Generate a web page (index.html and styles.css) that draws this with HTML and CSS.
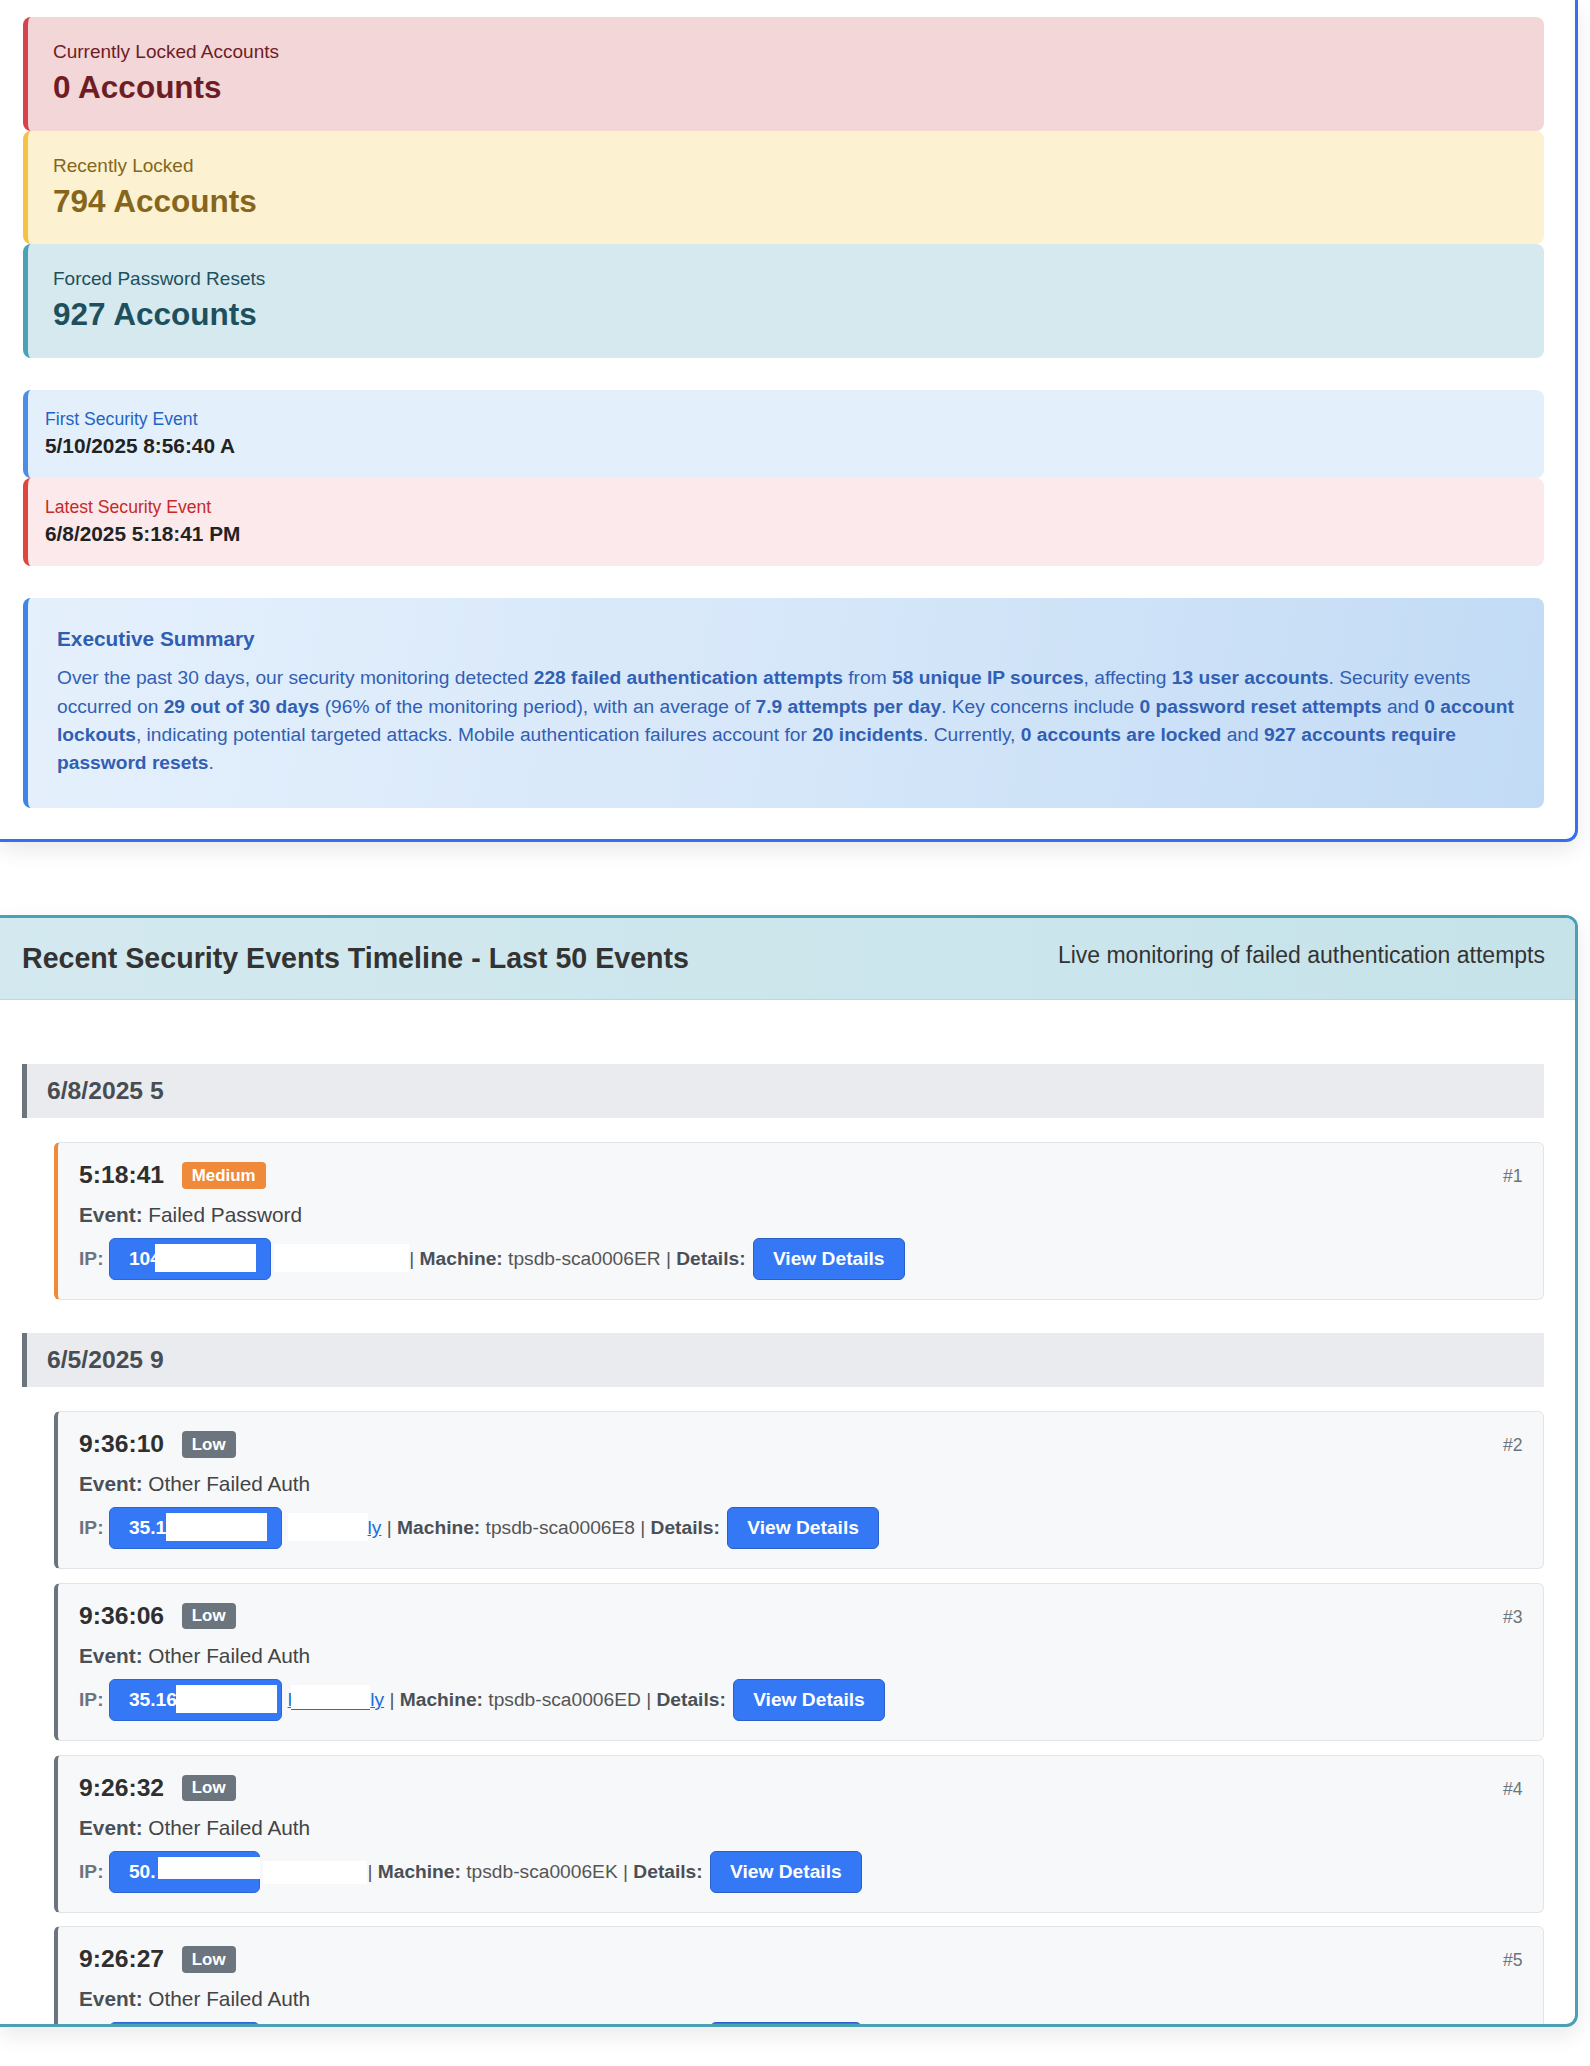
FILE: index.html
```html
<!DOCTYPE html>
<html lang="en">
<head>
<meta charset="utf-8">
<title>Security Monitoring</title>
<link rel="stylesheet" href="styles.css">
</head>
<body>
<div class="page">
  <section class="panel panel-overview">
    <div class="stats">
      <div class="stat stat-danger">
        <div class="stat-label">Currently Locked Accounts</div>
        <div class="stat-value">0 Accounts</div>
      </div>
      <div class="stat stat-warning">
        <div class="stat-label">Recently Locked</div>
        <div class="stat-value">794 Accounts</div>
      </div>
      <div class="stat stat-info">
        <div class="stat-label">Forced Password Resets</div>
        <div class="stat-value">927 Accounts</div>
      </div>
    </div>

    <div class="ranges">
      <div class="range range-first">
        <div class="range-label">First Security Event</div>
        <div class="range-value">5/10/2025 8:56:40 A</div>
      </div>
      <div class="range range-last">
        <div class="range-label">Latest Security Event</div>
        <div class="range-value">6/8/2025 5:18:41 PM</div>
      </div>
    </div>

    <div class="summary">
      <h3 class="summary-title">Executive Summary</h3>
      <p class="summary-text">Over the past 30 days, our security monitoring detected <b>228 failed authentication attempts</b> from <b>58 unique IP sources</b>, affecting <b>13 user accounts</b>. Security events occurred on <b>29 out of 30 days</b> (96% of the monitoring period), with an average of <b>7.9 attempts per day</b>. Key concerns include <b>0 password reset attempts</b> and <b>0 account</b> <b>lockouts</b>, indicating potential targeted attacks. Mobile authentication failures account for <b>20 incidents</b>. Currently, <b>0 accounts are locked</b> and <b>927 accounts require</b> <b>password resets</b>.</p>
    </div>
  </section>

  <section class="panel panel-timeline">
    <header class="panel-head">
      <h2 class="panel-title">Recent Security Events Timeline - Last 50 Events</h2>
      <span class="panel-sub">Live monitoring of failed authentication attempts</span>
    </header>
    <div class="timeline">
      <div class="day">
        <div class="day-head">6/8/2025 5</div>
        <div class="event sev-medium">
          <div class="event-top">
            <span class="time">5:18:41</span>
            <span class="badge badge-medium">Medium</span>
            <span class="num">#1</span>
          </div>
          <div class="event-type"><b>Event:</b> Failed Password</div>
          <div class="event-meta"><b class="ip-label">IP:</b> <span class="ip-pill v1">104<span class="redact"></span></span> <span class="redact mask v1"></span>| <b>Machine:</b> tpsdb-sca0006ER | <b>Details:</b> <span class="btn">View Details</span></div>
        </div>
      </div>

      <div class="day">
        <div class="day-head">6/5/2025 9</div>
        <div class="event">
          <div class="event-top">
            <span class="time">9:36:10</span>
            <span class="badge badge-low">Low</span>
            <span class="num">#2</span>
          </div>
          <div class="event-type"><b>Event:</b> Other Failed Auth</div>
          <div class="event-meta"><b class="ip-label">IP:</b> <span class="ip-pill v2">35.1<span class="redact"></span></span> <a class="iplink" href="#"><span class="redact mask v2"></span>ly</a> | <b>Machine:</b> tpsdb-sca0006E8 | <b>Details:</b> <span class="btn">View Details</span></div>
        </div>
        <div class="event">
          <div class="event-top">
            <span class="time">9:36:06</span>
            <span class="badge badge-low">Low</span>
            <span class="num">#3</span>
          </div>
          <div class="event-type"><b>Event:</b> Other Failed Auth</div>
          <div class="event-meta"><b class="ip-label">IP:</b> <span class="ip-pill v3">35.16<span class="redact"></span></span> <a class="iplink" href="#">l<span class="redact mask v3"></span>ly</a> | <b>Machine:</b> tpsdb-sca0006ED | <b>Details:</b> <span class="btn">View Details</span></div>
        </div>
        <div class="event">
          <div class="event-top">
            <span class="time">9:26:32</span>
            <span class="badge badge-low">Low</span>
            <span class="num">#4</span>
          </div>
          <div class="event-type"><b>Event:</b> Other Failed Auth</div>
          <div class="event-meta"><b class="ip-label">IP:</b> <span class="ip-pill v4">50.<span class="redact"></span></span> <span class="redact mask v4"></span>| <b>Machine:</b> tpsdb-sca0006EK | <b>Details:</b> <span class="btn">View Details</span></div>
        </div>
        <div class="event">
          <div class="event-top">
            <span class="time">9:26:27</span>
            <span class="badge badge-low">Low</span>
            <span class="num">#5</span>
          </div>
          <div class="event-type"><b>Event:</b> Other Failed Auth</div>
          <div class="event-meta"><b class="ip-label">IP:</b> <span class="ip-pill v4">50.<span class="redact"></span></span> <span class="redact mask v4"></span>| <b>Machine:</b> tpsdb-sca0006EK | <b>Details:</b> <span class="btn">View Details</span></div>
        </div>
      </div>
    </div>
  </section>
</div>
</body>
</html>
```

FILE: styles.css
```css
* { box-sizing: border-box; }

html, body {
  margin: 0;
  padding: 0;
  background: #ffffff;
}

body {
  font-family: "Liberation Sans", Arial, Helvetica, sans-serif;
  color: #333333;
}

.page {
  padding-right: 12px;
  padding-bottom: 40px;
}

.panel {
  background: #ffffff;
  box-shadow: 0 8px 22px rgba(0, 0, 0, 0.09);
}

/* ---------- Overview panel ---------- */
.panel-overview {
  border-right: 3px solid #3370ef;
  border-bottom: 3px solid #3370ef;
  border-radius: 0 0 12px 0;
  padding: 17px 31px 30.7px 23px;
}

.stat {
  border-left: 5px solid;
  border-radius: 8px;
  padding: 24px 25px;
}

.stat-label {
  font-size: 19px;
  line-height: 22px;
}

.stat-value {
  margin-top: 6px;
  font-size: 31.5px;
  line-height: 37.7px;
  font-weight: 700;
}

.stat-danger { background: #f3d6d8; border-left-color: #d6434f; color: #6f1d25; }
.stat-warning { background: #fcf1d0; border-left-color: #f5c242; color: #85661c; }
.stat-info { background: #d5e9ef; border-left-color: #4aa2b7; color: #1d4f5c; }

.ranges {
  margin-top: 32px;
}

.range {
  border-left: 5px solid;
  border-radius: 8px;
  padding: 19px 20px 20px 17px;
}

.range-label {
  font-size: 17.6px;
  line-height: 20px;
}

.range-value {
  margin-top: 5px;
  font-size: 20.8px;
  line-height: 24px;
  font-weight: 700;
  color: #222222;
}

.range-first { background: #e3f0fb; border-left-color: #4a8fe3; }
.range-first .range-label { color: #1f63c4; }
.range-last { background: #fbe9eb; border-left-color: #e0463d; }
.range-last .range-label { color: #c62a2a; }

.summary {
  margin-top: 32.3px;
  border-left: 5px solid #3d86e6;
  border-radius: 8px;
  padding: 29px 20px 30.6px 29px;
  background: linear-gradient(100deg, #e5f0fc 0%, #d6e7f9 50%, #c2dbf5 100%);
}

.summary-title {
  margin: 0 0 12.75px;
  font-size: 20.8px;
  line-height: 24px;
  font-weight: 700;
  color: #2e5eb2;
}

.summary-text {
  margin: 0;
  font-size: 19.2px;
  line-height: 28.4px;
  color: #315fb3;
}

/* ---------- Timeline panel ---------- */
.panel-timeline {
  margin-top: 73px;
  border: 3px solid #4aa0b5;
  border-left: none;
  border-radius: 0 12px 12px 0;
  overflow: hidden;
}

.panel-head {
  display: flex;
  justify-content: space-between;
  align-items: flex-start;
  padding: 24px 30px 24px 22px;
  background: linear-gradient(90deg, #d3e9ef, #c6e3ea);
  border-bottom: 1px solid #b8d9e1;
}

.panel-title {
  margin: 0;
  font-size: 28.6px;
  line-height: 33px;
  font-weight: 700;
  color: #333333;
}

.panel-sub {
  font-size: 23px;
  line-height: 26.4px;
  color: #333333;
}

.timeline {
  height: 1024px;
  overflow: hidden;
  padding: 64px 31.5px 0 22px;
}

.day {
  padding-bottom: 19px;
}

.day-head {
  background: #e9ebef;
  border-left: 5px solid #6c757d;
  padding: 13px 20px;
  margin-bottom: 24.3px;
  font-size: 24.7px;
  line-height: 28px;
  font-weight: 700;
  color: #484d53;
}

.event {
  margin-left: 32px;
  margin-bottom: 13.7px;
  background: #f7f8fa;
  border: 1px solid #e1e4e8;
  border-left: 4px solid #6c757d;
  border-radius: 6px;
  padding: 18px 20px 19px 21px;
}

.event.sev-medium { border-left-color: #ef8a3a; }

.event-top {
  display: flex;
  align-items: center;
  height: 28px;
}

.time {
  font-size: 24.7px;
  line-height: 28px;
  font-weight: 700;
  color: #2f2f2f;
}

.badge {
  margin-left: 17.7px;
  padding: 3.5px 10px;
  border-radius: 4px;
  font-size: 16.9px;
  line-height: 19.4px;
  font-weight: 700;
  color: #ffffff;
}

.badge-medium { background: #ef8a3a; }
.badge-low { background: #6c757d; }

.num {
  margin-left: auto;
  font-size: 17.6px;
  line-height: 20px;
  color: #6c757d;
  padding-top: 2px;
}

.event-type {
  margin-top: 14px;
  font-size: 20.8px;
  line-height: 24px;
  color: #444444;
}

.event-type b { color: #495057; }

.event-meta {
  margin-top: 11px;
  height: 42px;
  font-size: 19.2px;
  line-height: 42px;
  white-space: nowrap;
  color: #555555;
}

.event-meta b { color: #4a5056; }
.event-meta .ip-label { color: #6c757d; }

.ip-pill {
  display: inline-block;
  vertical-align: top;
  height: 42px;
  line-height: 40px;
  padding-left: 19px;
  border: 1px solid #2a66d6;
  border-radius: 6px;
  background: #3478f6;
  color: #ffffff;
  font-weight: 700;
}

.redact {
  display: inline-block;
  vertical-align: top;
  height: 28px;
  margin-top: 5px;
  background: #ffffff;
}

.event-meta > .redact,
.iplink .redact {
  margin-top: 6px;
}

.ip-pill.v1 { padding-right: 13.7px; }
.ip-pill.v1 .redact { margin-left: -5.7px; width: 101px; }
.ip-pill.v2 { padding-right: 14.4px; }
.ip-pill.v2 .redact { margin-left: -0.7px; width: 101.3px; }
.ip-pill.v3 { padding-right: 4.4px; }
.ip-pill.v3 .redact { margin-left: -1.3px; width: 101.3px; }
.ip-pill.v4 { padding-right: 0; }
.ip-pill.v4 .redact { margin-left: 2.4px; width: 102px; margin-right: -1px; height: 22px; }

.mask.v1 { margin-left: -2.4px; width: 135.4px; }
.mask.v2 { width: 80px; }
.mask.v3 { margin-left: -1.3px; width: 79.7px; height: 25px; border-bottom: 1px solid #1a6fe0; }
.mask.v4 { margin-left: -1.9px; width: 104px; margin-top: 10px; height: 23px; }

.iplink {
  color: #1a6fe0;
  text-decoration: underline;
}

.btn {
  display: inline-block;
  vertical-align: top;
  height: 42px;
  line-height: 40px;
  margin-left: 2px;
  padding: 0 19px;
  border: 1px solid #2a5fc8;
  border-radius: 6px;
  background: #3478f6;
  color: #ffffff;
  font-weight: 700;
}
```
